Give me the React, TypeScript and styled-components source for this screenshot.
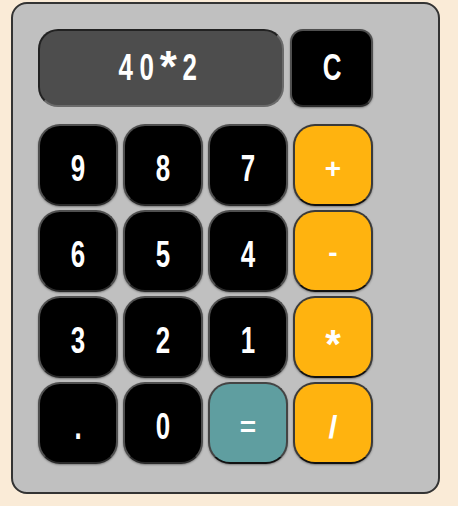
import React from 'react';
import styled, { createGlobalStyle } from 'styled-components';

const GlobalStyle = createGlobalStyle`
  html, body { margin: 0; padding: 0; background: #faebd7; }
  body { font-family: "Liberation Sans", Arial, sans-serif; }
  *, *::before, *::after { box-sizing: border-box; }
`;

const Page = styled.div`
  padding: 2px 0 0 11px;
`;

const Calculator = styled.div`
  width: 429px;
  height: 492px;
  background: #c0c0c0;
  border: 2px solid #333;
  border-radius: 16px;
  padding: 25px 0 0 25px;
  display: flex;
  flex-direction: column;
  gap: 17px;
`;

const TopRow = styled.div`
  display: flex;
  gap: 6px;
`;

const Display = styled.div`
  width: 246px;
  height: 78px;
  background: #4d4d4d;
  border: 2px solid;
  border-color: #222 #6b6b6b #6b6b6b #222;
  border-radius: 20px;
  display: flex;
  align-items: center;
  justify-content: center;
  padding-right: 7px;
  color: #fff;
`;

const Keypad = styled.div`
  display: grid;
  grid-template-columns: repeat(4, 80px);
  grid-auto-rows: 82px;
  column-gap: 5px;
  row-gap: 4px;
`;

type Tone = 'dark' | 'orange' | 'teal';

const tones: Record<Tone, { bg: string; edge: string; low: string }> = {
  dark: { bg: '#000', edge: '#4f4f4f', low: '#2a2a2a' },
  orange: { bg: '#ffb30f', edge: '#3a3a3a', low: '#111' },
  teal: { bg: '#5f9ea0', edge: '#444', low: '#111' },
};

const Key = styled.button<{ $tone: Tone }>`
  margin: 0;
  padding: 8px 0 0;
  border: 2px solid;
  border-color: ${(p) => tones[p.$tone].edge};
  border-bottom-color: ${(p) => tones[p.$tone].low};
  border-radius: 22px;
  background: ${(p) => tones[p.$tone].bg};
  box-shadow: 0 1px 2px rgba(0, 0, 0, 0.35);
  display: flex;
  align-items: center;
  justify-content: center;
  color: #fff;
  font-family: inherit;
  cursor: pointer;
  overflow: hidden;
`;

const ClearKey = styled(Key)`
  width: 83px;
  height: 78px;
  padding: 0;
  border-radius: 13px;
`;

const Glyph = styled.span<{ $cond?: boolean; $size: number; $dy: number; $w?: number }>`
  display: inline-block;
  font-size: ${(p) => p.$size}px;
  line-height: 1;
  font-weight: 700;
  text-align: center;
  width: ${(p) => (p.$w ? `${p.$w}px` : 'auto')};
  transform: translateY(${(p) => p.$dy}px) ${(p) => (p.$cond ? 'scaleX(0.72)' : '')};
`;

const keySpec = (ch: string) => {
  switch (ch) {
    case '+':
      return { size: 28, dy: 0 };
    case '-':
      return { size: 28, dy: -2 };
    case '=':
      return { size: 28, dy: 0 };
    case '/':
      return { size: 32, dy: 0 };
    case '*':
      return { size: 40, dy: 3 };
    default:
      return { size: 36, dy: 0, cond: true };
  }
};

const displaySpec = (ch: string) => {
  if (ch === '*') return { size: 44, dy: -1 };
  return { size: 36, dy: 0, cond: true };
};

const keys: { label: string; tone: Tone }[] = [
  { label: '9', tone: 'dark' },
  { label: '8', tone: 'dark' },
  { label: '7', tone: 'dark' },
  { label: '+', tone: 'orange' },
  { label: '6', tone: 'dark' },
  { label: '5', tone: 'dark' },
  { label: '4', tone: 'dark' },
  { label: '-', tone: 'orange' },
  { label: '3', tone: 'dark' },
  { label: '2', tone: 'dark' },
  { label: '1', tone: 'dark' },
  { label: '*', tone: 'orange' },
  { label: '.', tone: 'dark' },
  { label: '0', tone: 'dark' },
  { label: '=', tone: 'teal' },
  { label: '/', tone: 'orange' },
];

export default function App() {
  const expression = '40*2';
  return (
    <>
      <GlobalStyle />
      <Page>
        <Calculator>
          <TopRow>
            <Display>
              {expression.split('').map((ch, i) => {
                const s = displaySpec(ch);
                return (
                  <Glyph key={i} $size={s.size} $dy={s.dy} $cond={s.cond} $w={21.5}>
                    {ch}
                  </Glyph>
                );
              })}
            </Display>
            <ClearKey $tone="dark">
              <Glyph $size={36} $dy={0} $cond>
                C
              </Glyph>
            </ClearKey>
          </TopRow>
          <Keypad>
            {keys.map((k) => {
              const s = keySpec(k.label);
              return (
                <Key key={k.label} $tone={k.tone}>
                  <Glyph $size={s.size} $dy={s.dy} $cond={s.cond}>
                    {k.label}
                  </Glyph>
                </Key>
              );
            })}
          </Keypad>
        </Calculator>
      </Page>
    </>
  );
}
